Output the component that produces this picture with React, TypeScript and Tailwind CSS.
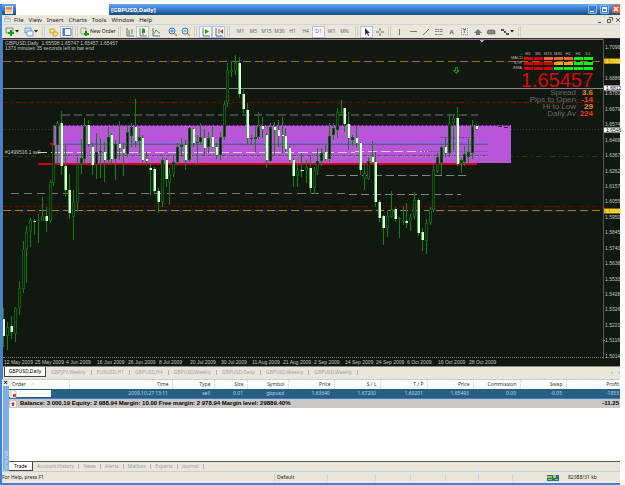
import React from "react";

type Candle = [number, number, number, number, number];

// high, body top, body bottom, low, 1 = falling day
const candles: Candle[] = [
  [308, 319, 336, 347, 1], [322, 327, 336, 350, 0], [316, 326, 332, 339, 1],
  [307, 308, 334, 342, 0], [281, 288, 308, 315, 0], [241, 249, 289, 293, 0],
  [226, 232, 249, 283, 0], [218, 220, 232, 247, 0], [219, 221, 222, 235, 1],
  [214, 220, 221, 243, 0], [197, 216, 221, 221, 0], [207, 216, 221, 232, 1],
  [180, 182, 221, 223, 0], [125, 145, 183, 186, 0], [121, 123, 145, 163, 0],
  [111, 123, 166, 175, 1], [145, 166, 190, 197, 1], [174, 190, 213, 219, 1],
  [190, 202, 217, 240, 0], [157, 164, 203, 212, 0], [139, 158, 164, 174, 0],
  [118, 126, 159, 163, 0], [120, 125, 144, 147, 1], [143, 147, 165, 175, 1],
  [133, 152, 165, 179, 0], [138, 151, 152, 178, 0], [142, 152, 160, 182, 1],
  [127, 137, 160, 165, 0], [133, 135, 159, 163, 1], [140, 144, 159, 180, 0],
  [121, 144, 148, 160, 1], [143, 149, 153, 176, 1], [126, 132, 154, 157, 0],
  [123, 127, 136, 147, 0], [99, 127, 141, 147, 1], [128, 137, 141, 153, 0],
  [135, 138, 160, 162, 1], [152, 159, 161, 166, 1], [163, 168, 170, 195, 1],
  [167, 169, 191, 193, 1], [188, 191, 202, 213, 1], [157, 160, 202, 207, 0],
  [158, 160, 179, 187, 1], [168, 174, 183, 205, 0], [155, 162, 174, 177, 0],
  [143, 147, 162, 165, 0], [138, 145, 147, 157, 0], [140, 145, 160, 170, 1],
  [127, 128, 160, 162, 0], [128, 129, 143, 147, 1], [135, 142, 143, 164, 0],
  [123, 137, 142, 145, 0], [129, 138, 148, 155, 1], [132, 138, 147, 153, 0],
  [127, 137, 147, 148, 1], [143, 147, 155, 159, 1], [132, 137, 155, 160, 0],
  [101, 104, 137, 140, 0], [63, 70, 103, 107, 0], [61, 70, 72, 77, 0],
  [55, 63, 71, 75, 0], [57, 63, 94, 98, 1], [88, 94, 109, 113, 1],
  [103, 110, 138, 145, 1], [135, 138, 139, 145, 0], [127, 137, 139, 152, 0],
  [112, 126, 137, 139, 0], [117, 126, 129, 138, 1], [133, 135, 160, 168, 1],
  [123, 127, 161, 162, 0], [122, 127, 130, 155, 1], [120, 130, 136, 147, 1],
  [117, 135, 136, 153, 1], [128, 136, 149, 152, 1], [146, 148, 160, 162, 1],
  [158, 160, 176, 187, 1], [165, 170, 176, 187, 0], [153, 170, 171, 177, 1],
  [160, 167, 171, 183, 0], [155, 168, 188, 193, 1], [167, 170, 188, 194, 0],
  [148, 161, 171, 175, 0], [148, 153, 161, 166, 0], [145, 152, 159, 161, 1],
  [123, 136, 159, 162, 0], [123, 128, 135, 140, 0], [108, 112, 130, 138, 0],
  [100, 112, 113, 115, 0], [108, 108, 124, 132, 1], [112, 124, 138, 150, 1],
  [135, 137, 140, 146, 0], [126, 138, 143, 147, 1], [142, 143, 170, 175, 1],
  [165, 173, 179, 190, 0], [157, 161, 179, 180, 0], [141, 157, 162, 163, 1],
  [152, 162, 202, 207, 1], [200, 202, 218, 222, 1], [215, 216, 228, 245, 1],
  [211, 216, 228, 237, 0], [191, 209, 217, 218, 0], [207, 209, 219, 222, 1],
  [217, 218, 219, 238, 0], [207, 220, 221, 225, 0], [203, 221, 223, 228, 1],
  [214, 217, 222, 231, 0], [192, 200, 217, 219, 0], [198, 200, 233, 236, 1],
  [228, 232, 240, 251, 1], [219, 223, 241, 254, 0], [207, 209, 223, 225, 0],
  [165, 170, 210, 212, 0], [153, 157, 171, 173, 0], [146, 147, 163, 175, 0],
  [137, 147, 153, 157, 1], [115, 123, 153, 157, 0], [116, 118, 123, 150, 0],
  [107, 118, 164, 166, 1], [158, 160, 164, 173, 0], [146, 154, 162, 166, 0],
  [139, 152, 157, 163, 0], [120, 126, 153, 159, 0], [124, 126, 129, 130, 1],
];

// x1, x2, y, colour, dash pattern, thickness
const levels: [number, number, number, string, string, number][] = [
  [4, 603, 61, "#9a6a10", "8 4", 1],
  [4, 603, 88, "#8c848c", "", 1],
  [4, 603, 102, "#7c0000", "5 3 2 3", 1],
  [63, 478, 114, "#444644", "8 4", 2],
  [4, 603, 129, "#4b3a4e", "1 2", 1],
  [4, 603, 156, "#0d5010", "5 4 1 4", 1],
  [12, 346, 193, "#777777", "8 5", 1],
  [349, 461, 194, "#858585", "8 4", 1],
  [326, 468, 175, "#858585", "8 4", 1],
  [4, 603, 206, "#760000", "4 3 2 3", 1],
  [4, 603, 210, "#b87614", "8 4", 1],
];

const bandLines: [number, number, number, string, string, number][] = [
  [55, 511, 125, "#5a2068", "3 1", 1],
  [55, 511, 129, "#99709c", "1 2", 1],
  [59, 488, 143, "#3d78d0", "2 1", 1],
  [59, 488, 144, "#70528a", "", 1],
  [441, 475, 137, "#5c48a0", "2 1", 1],
  [39, 355, 152, "#dccce0", "9 4", 1],
  [355, 430, 151, "#dccce0", "9 4", 1],
  [422, 488, 151, "#5060c0", "2 1", 1],
  [55, 488, 155, "#6a4478", "4 1 1 1", 1],
  [55, 488, 156, "#a58ca4", "3 2", 1],
  [39, 477, 163, "#d40000", "", 2],
  [51, 55, 143, "#d40000", "", 2],
];

const priceTicks = [
  "1.7096", "1.6991", "1.6886", "1.6781", "1.6679", "1.6574", "1.6469",
  "1.6367", "1.6262", "1.6157", "1.6055", "1.5950", "1.5845", "1.5740",
  "1.5638", "1.5533", "1.5428", "1.5326", "1.5221", "1.5116", "1.5014",
];

const priceMarks = [
  { price: "1.7000", top: 7, className: "bg-[#e8b800] text-[#fff2a0]" },
  { price: "1.6812", top: 15.4, className: "bg-white text-black" },
  { price: "1.6546", top: 28.3, className: "bg-white text-black" },
  { price: "1.6000", top: 53.7, className: "bg-[#e8b800] text-[#fff2a0]" },
];

const dates = [
  "12 May 2009", "25 May 2009", "4 Jun 2009", "16 Jun 2009", "26 Jun 2009",
  "8 Jul 2009", "20 Jul 2009", "30 Jul 2009", "11 Aug 2009", "21 Aug 2009",
  "2 Sep 2009", "14 Sep 2009", "24 Sep 2009", "6 Oct 2009", "16 Oct 2009",
  "28 Oct 2009",
];

const signals = [
  { name: "MACD", cells: "RROOOGG" },
  { name: "STR", cells: "RRRYYGG" },
  { name: "EMA", cells: "RRRGGGG" },
];

const signalColors: Record<string, string> = {
  R: "bg-[#d40000]",
  O: "bg-[#ff6040]",
  Y: "bg-[#ffa000]",
  G: "bg-[#10f010]",
};

const stats = [
  { label: "Spread", value: "3.6", className: "text-[#f08a20]" },
  { label: "Pips to Open", value: "-14", className: "text-[#f03c10]" },
  { label: "Hi to Low", value: "29", className: "text-[#f08a20]" },
  { label: "Daily Av", value: "224", className: "text-[#f03c10]" },
];

const chartTabs = [
  "GBPJPY,Weekly", "EURUSD,H1", "GBPUSD,H4", "GBPUSD,Weekly",
  "GBPUSD,Daily", "GBPUSD,Weekly", "GBPUSD,Weekly",
];

const terminalTabs = [
  "Account History", "News", "Alerts", "Mailbox", "Experts", "Journal",
];

const columns = [
  { name: "Time", width: "w-[103px]", value: "2009.10.27 13:11" },
  { name: "Type", width: "w-[42px]", value: "sell" },
  { name: "Size", width: "w-[33px]", value: "0.01" },
  { name: "Symbol", width: "w-[41px]", value: "gbpusd" },
  { name: "Price", width: "w-[46px]", value: "1.63640" },
  { name: "S / L", width: "w-[46px]", value: "1.67200" },
  { name: "T / P", width: "w-[47px]", value: "1.60201" },
  { name: "Price", width: "w-[46px]", value: "1.65493" },
  { name: "Commission", width: "w-[47px]", value: "0.00" },
  { name: "Swap", width: "w-[46px]", value: "-0.05" },
  { name: "Profit", width: "w-[54px]", value: "-1853" },
];

const Icon = ({ children }: { children: React.ReactNode }) => (
  <svg viewBox="0 0 10 10" className="size-[10px] shrink-0" fill="none">
    {children}
  </svg>
);

const Tool = ({
  label,
  pressed,
  wide,
  children,
}: {
  label: string;
  pressed?: boolean;
  wide?: boolean;
  children: React.ReactNode;
}) => (
  <button
    aria-label={label}
    className={`flex h-3 shrink-0 items-center justify-center border ${
      wide ? "w-[19px]" : "w-[13px]"
    } ${
      pressed ? "border-[#b4c4dc] bg-[#faf9f5]" : "border-transparent"
    }`}
  >
    {children}
  </button>
);

const Handle = () => (
  <span className="mx-[2px] h-[11px] w-[3px] shrink-0 border-x border-l-[#d8cfae] border-r-[#c3d0e4]" />
);

const Caret = () => (
  <svg viewBox="0 0 4 3" className="w-[4px] shrink-0">
    <path d="M0 0h4L2 2.5z" fill="#222" />
  </svg>
);

const TitleBar = () => (
  <header className="flex h-[11px] shrink-0 items-center bg-linear-to-b from-[#69a7ee] via-[#3378d0] to-[#1c4a76]">
    <div className="flex h-full w-[14px] items-center justify-center">
      <svg viewBox="0 0 8 8" className="size-[8px]">
        <path d="M0 0h8v8H0z" fill="#f4e6c4" />
        <path d="M1 1h6v3H1z" fill="#e8876a" />
        <path d="M1 5h6v1H1z" fill="#e3b45a" />
      </svg>
    </div>
    <div className="h-full w-[93px] bg-white" />
    <h1 className="pl-[2px] text-[6px] leading-none font-bold text-white">
      [GBPUSD,Daily]
    </h1>
    <div className="ml-auto flex gap-[3px]">
      <button aria-label="Minimize" className="flex size-[9px] items-end rounded-[1px] border border-[#8fbaf0] bg-[#3b7cd6] p-px">
        <span className="h-px w-[4px] bg-white" />
      </button>
      <button aria-label="Maximize" className="size-[9px] rounded-[1px] border border-[#8fbaf0] bg-[#3b7cd6] p-px">
        <span className="block size-[5px] border border-t-2 border-white" />
      </button>
      <button aria-label="Close" className="size-[8px] rounded-l-[1px] bg-[#e0603c]">
        <svg viewBox="0 0 8 8">
          <path d="M2 2l4 4M6 2L2 6" stroke="#fff" strokeWidth="1.3" />
        </svg>
      </button>
    </div>
  </header>
);

const MenuBar = () => (
  <nav className="flex h-[10px] shrink-0 items-center border-b border-[#ccd6e4] pl-[2px] text-[6px] leading-none text-[#222]">
    <svg viewBox="0 0 8 8" className="mr-[3px] size-[7px]">
      <path d="M0 2h8v5H0z" fill="#9cc4ee" />
      <path d="M1 4h6v2H1z" fill="#e8f2fc" />
      <path d="M1 1h5" stroke="#d4a94c" />
    </svg>
    <div className="flex gap-[5px]">
      {["File", "View", "Insert", "Charts", "Tools", "Window", "Help"].map(
        (item) => (
          <button key={item}>{item}</button>
        )
      )}
    </div>
    <div className="ml-auto flex items-center gap-[3px]">
      <button aria-label="Minimize chart" className="flex size-[6px] items-end">
        <span className="h-px w-[3px] bg-[#555]" />
      </button>
      <button aria-label="Restore chart">
        <svg viewBox="0 0 6 6" className="size-[6px]" fill="none" stroke="#555">
          <path d="M2 .5h3.500v3M.5 2.500h3v3h-3z" />
        </svg>
      </button>
      <button aria-label="Close chart">
        <svg viewBox="0 0 4 6" className="h-[6px] w-[4px]" stroke="#555">
          <path d="M0 1l4 4M4 1L0 5" />
        </svg>
      </button>
    </div>
  </nav>
);

const Toolbar = () => (
  <div className="flex h-[13px] shrink-0 items-center overflow-hidden text-[5px] leading-none text-[#666676]">
    <Tool label="New chart" wide>
      <Icon>
        <path d="M1 1h7v5H1z" fill="#dceedd" stroke="#6b8f70" />
        <path d="M6 3v6M3 6h6" stroke="#12a012" strokeWidth="2" />
      </Icon>
      <Caret />
    </Tool>
    <Tool label="Profiles" wide>
      <Icon>
        <path d="M1 1h6v5H1z" fill="#dce9fa" stroke="#6f9cd6" />
        <path d="M3 4h6v5H3z" fill="#f2f7fd" stroke="#6f9cd6" />
      </Icon>
      <Caret />
    </Tool>
    <Handle />
    <Tool label="Market watch">
      <Icon>
        <path d="M1 2h4l1 2-2 2H1zM4 5h4l1 2-2 2H4z" fill="#fbe48a" stroke="#c79a28" strokeWidth=".8" />
      </Icon>
    </Tool>
    <Tool label="Navigator" pressed>
      <Icon>
        <path d="M1 1.500h8v7H1z" fill="#fff" stroke="#4a7cc4" />
        <path d="M1 1.500h2v7H1z" fill="#4a7cc4" />
      </Icon>
    </Tool>
    <Handle />
    <button className="flex h-3 w-[36px] shrink-0 items-center text-[#222]">
      <Icon>
        <path d="M1 1h5v6H1z" fill="#f2efe2" stroke="#909070" strokeWidth=".8" />
        <path d="M6 4v5M4 7h5" stroke="#12a012" strokeWidth="2" />
      </Icon>
      <span className="whitespace-nowrap">New Order</span>
    </button>
    <Handle />
    <Tool label="Bar chart">
      <Icon>
        <path d="M2 1v8h7M4 3v5M7 2v5" stroke="#667868" />
      </Icon>
    </Tool>
    <Tool label="Candlesticks" pressed>
      <Icon>
        <path d="M2 1v8h7" stroke="#667868" />
        <path d="M5 1v7" stroke="#18a018" />
        <path d="M4 2h3v4H4z" fill="#18a018" />
      </Icon>
    </Tool>
    <Tool label="Line chart">
      <Icon>
        <path d="M2 1v8h7" stroke="#667868" />
        <path d="M3 7l2-4 2 2 2 1" stroke="#55a055" />
      </Icon>
    </Tool>
    <div className="flex pl-[4px]">
      <Tool label="Zoom in">
        <Icon>
          <path d="M6 6l3 3" stroke="#c8a040" strokeWidth="1.600" />
          <circle cx="4" cy="4" r="3" fill="#dcebfc" stroke="#3f78cc" />
          <path d="M2.500 4h3M4 2.500v3" stroke="#3f78cc" />
        </Icon>
      </Tool>
      <Tool label="Zoom out">
        <Icon>
          <path d="M6 6l3 3" stroke="#c8a040" strokeWidth="1.600" />
          <circle cx="4" cy="4" r="3" fill="#dcebfc" stroke="#3f78cc" />
          <path d="M2.500 4h3" stroke="#3f78cc" />
        </Icon>
      </Tool>
    </div>
    <Handle />
    <Tool label="Auto scroll" pressed>
      <Icon>
        <path d="M2 1v8h7" stroke="#667868" />
        <path d="M4 2l4 2.500L4 7z" fill="#18a018" />
      </Icon>
    </Tool>
    <Tool label="Chart shift" pressed>
      <Icon>
        <path d="M2 1v8h7M5 2v5" stroke="#506090" />
        <path d="M9 2v5L6 4.500z" fill="#c83c28" />
      </Icon>
    </Tool>
    <Handle />
    <div className="flex px-[2px]">
      {["M1", "M5", "M15", "M30", "H1", "H4", "D1", "W1", "MN"].map((tf) => (
        <Tool key={tf} label={tf} pressed={tf === "D1"}>
          {tf}
        </Tool>
      ))}
    </div>
    <Handle />
    <Tool label="Cursor" pressed>
      <Icon>
        <path d="M3 1v7l2-2 1 3 1-.5-1-2.500h2z" fill="#333" />
      </Icon>
    </Tool>
    <Tool label="Crosshair">
      <Icon>
        <path d="M5 1v3M5 6v3M1 5h3M6 5h3" stroke="#666" />
      </Icon>
    </Tool>
    <Handle />
    <Tool label="Vertical line">
      <Icon>
        <path d="M4.500 2v6" stroke="#777" />
      </Icon>
    </Tool>
    <Tool label="Horizontal line">
      <Icon>
        <path d="M2 4.500h7" stroke="#777" />
      </Icon>
    </Tool>
    <Tool label="Trendline">
      <Icon>
        <path d="M2 8l6-6" stroke="#777" />
      </Icon>
    </Tool>
    <Tool label="Fibonacci">
      <Icon>
        <path d="M1 2.500h8M1 4.500h8M1 7.500h8" stroke="#888" strokeDasharray="2 .5" />
      </Icon>
    </Tool>
    <Tool label="Text">
      <span className="text-[6px] font-bold">A</span>
    </Tool>
    <Tool label="Text label">
      <span className="border border-dotted border-[#999] px-px text-[5px] font-bold">T</span>
    </Tool>
    <Tool label="Arrow up">
      <Icon>
        <path d="M5 2l4 4H1zM3 6h4v2H3z" fill="#777" />
      </Icon>
    </Tool>
    <Tool label="Stop sign">
      <Icon>
        <path d="M2 3h6l1 1v3H2L1 6z" fill="#888" stroke="#555" strokeWidth=".6" />
      </Icon>
    </Tool>
    <Tool label="Arrows" wide>
      <Icon>
        <path d="M1 2h3v2H1zM4 4h2v2H4zM6 6h3v2H6z" fill="#555" />
      </Icon>
      <Caret />
    </Tool>
    <Handle />
  </div>
);

const PriceChart = () => (
  <svg
    viewBox="4 39 599 318"
    preserveAspectRatio="none"
    shapeRendering="crispEdges"
    className="absolute inset-0 h-full w-full"
  >
    <path d="M4 39.500h599" stroke="#8a848a" />
    <path d="M480 40h5l-2.500 2.500z" fill="#aaaaaa" />
    {levels.map(([x1, x2, y, color, dash, width], i) => (
      <path
        key={i}
        d={`M${x1} ${y + width / 2}H${x2}`}
        stroke={color}
        strokeDasharray={dash || undefined}
        strokeWidth={width}
      />
    ))}
    <rect x="55" y="125" width="456" height="38" fill="#b955d8" />
    {bandLines.map(([x1, x2, y, color, dash, width], i) => (
      <path
        key={i}
        d={`M${x1} ${y + width / 2}H${x2}`}
        stroke={color}
        strokeDasharray={dash || undefined}
        strokeWidth={width}
      />
    ))}
    {candles.map(([high, top, bottom, low, falling], i) => {
      const x = Math.round(4.2 + i * 3.867);
      const height = Math.max(bottom - top, 1);
      return (
        <g key={i}>
          <path d={`M${x + 0.5} ${high}V${low}`} stroke="#138013" />
          {falling ? (
            <>
              <rect x={x - 1} y={top} width="3" height={height} fill="#35b835" />
              <rect x={x} y={top} width="2" height={height} fill="#e2ffe2" />
            </>
          ) : (
            <>
              <rect x={x - 1} y={top} width="3" height={height} fill="#0d5c0d" />
              {height > 2 && (
                <rect x={x} y={top + 1} width="1" height={height - 2} fill="#08180a" />
              )}
            </>
          )}
        </g>
      );
    })}
    <path d="M455.500 67.500h2v3h1.500l-2.500 3-2.500-3h1.500z" fill="none" stroke="#128a12" />
    <path d="M498 126.500h4M504 127.500h4" stroke="#4a1a58" />
  </svg>
);

const SignalPanel = () => (
  <div className="absolute top-[12px] right-[10px] flex flex-col items-end">
    <div className="grid grid-cols-[12px_repeat(7,10px)] text-right text-[4px] leading-[4px] text-[#bbb]">
      <span className="leading-[5px]">..:</span>
      {["M1", "M5", "M15", "M30", "H1", "H4", "D1"].map((tf) => (
        <span key={tf} className="text-center leading-[5px]">
          {tf}
        </span>
      ))}
      {signals.map(({ name, cells }) => (
        <React.Fragment key={name}>
          <span className="pr-px">{name}</span>
          {cells.split("").map((cell, i) => (
            <span key={i} className={`m-px mr-0 h-[3px] ${signalColors[cell]}`} />
          ))}
        </React.Fragment>
      ))}
    </div>
    <p className="text-[20px] leading-[18px] text-[#d80808]">1.65457</p>
    <dl className="grid grid-cols-[auto_17px] text-right text-[8px] leading-[7px]">
      {stats.map(({ label, value, className }) => (
        <React.Fragment key={label}>
          <dt className="text-[#686868]">{label}</dt>
          <dd className={`font-bold ${className}`}>{value}</dd>
        </React.Fragment>
      ))}
    </dl>
  </div>
);

const ChartWindow = () => (
  <main className="flex min-h-[328px] flex-1 flex-col border-t border-[#3a2c3e] bg-[#111810] text-[#c4c4c4]">
    <div className="flex flex-1">
      <section className="relative flex-1 overflow-hidden font-['Liberation_Sans',sans-serif]">
        <PriceChart />
        <div className="absolute top-[2px] left-[2px] text-[5px] leading-[5px] whitespace-pre">
          <p>GBPUSD,Daily  1.65598 1.65747 1.65457 1.65457</p>
          <p>1373 minutes 35 seconds left to bar end</p>
        </div>
        <p className="absolute top-[35%] left-[2px] text-[5px] leading-[5px]">
          #1499516.1 sell
        </p>
        <SignalPanel />
      </section>
      <aside className="relative -mb-[2px] flex w-[17px] flex-col justify-between border-l border-[#5a565a] pt-[6px] font-['Liberation_Sans_Narrow','Liberation_Sans',sans-serif] text-[5px] leading-[5px]">
        {priceTicks.map((price) => (
          <span key={price} className="flex items-center gap-px">
            <i className="h-px w-px bg-[#aaa]" />
            {price}
          </span>
        ))}
        {priceMarks.map(({ price, top, className }) => (
          <span
            key={price}
            className={`absolute inset-x-0 -translate-y-1/2 pl-[2px] ${className}`}
            style={{ top: `${top}%` }}
          >
            {price}
          </span>
        ))}
      </aside>
    </div>
    <div className="mr-[17px] flex h-[9px] shrink-0 border-t border-dotted border-[#777] font-['Liberation_Sans_Narrow','Liberation_Sans',sans-serif] text-[5px] leading-[9px]">
      {dates.map((date) => (
        <span key={date} className="w-[31px] shrink-0 pl-px whitespace-nowrap">
          {date}
        </span>
      ))}
    </div>
  </main>
);

const ChartTabs = () => (
  <div className="flex h-[13px] shrink-0 items-center border-t border-[#888] pb-[2px] pl-px text-[5px] leading-none text-[#9aa3b4]">
    <button className="h-[10px] w-[42px] border border-t-0 border-[#444] bg-white text-black">
      GBPUSD,Daily
    </button>
    {chartTabs.map((tab, i) => (
      <button key={i} className="border-r border-[#b0b0b8] px-[5px]">
        {tab}
      </button>
    ))}
    <span className="ml-auto flex gap-[6px] text-[#556]">
      <button aria-label="Scroll tabs left">‹</button>
      <button aria-label="Scroll tabs right">›</button>
    </span>
  </div>
);

const Terminal = () => (
  <section className="flex h-[93px] shrink-0 border-y border-[#c8ccd4]">
    <div className="flex w-[7px] shrink-0 flex-col items-center">
      <button aria-label="Close terminal" className="text-[7px] leading-[6px] font-bold text-black">
        ×
      </button>
      <div className="flex w-[6px] flex-1 items-center bg-[#7eaee4]">
        <span className="mt-auto rotate-180 text-[5px] leading-[6px] text-[#dbe9fa] [writing-mode:vertical-rl]">
          Terminal
        </span>
      </div>
    </div>
    <div className="flex flex-1 flex-col">
      <div className="flex-1 bg-white">
        <table className="w-full table-fixed border-collapse text-right text-[5px] leading-[9px]">
          <thead>
            <tr className="text-[#333]">
              <th className="w-[60px] border-r border-dotted border-[#ccc] p-0 pl-[3px] text-left font-normal">
                Order <span className="pl-[5px] text-[#999]">∕</span>
              </th>
              {columns.map(({ name, width }, i) => (
                <th
                  key={i}
                  className={`${width} border-r border-dotted border-[#ccc] p-0 pr-[3px] font-normal last:border-0 last:pr-px`}
                >
                  {name}
                </th>
              ))}
            </tr>
          </thead>
          <tbody>
            <tr className="border-b border-[#3f7cc8] bg-[#265f80] text-[#b8d4f0]">
              <td className="p-0">
                <div className="flex h-[7px] w-[42px] items-center bg-white">
                  <svg viewBox="0 0 8 8" className="size-[8px]">
                    <path d="M1 0h4l2 2v6H1z" fill="#f4f4ee" stroke="#888" strokeWidth=".5" />
                    <path d="M4 4h3v3H4z" fill="#e04a20" />
                  </svg>
                </div>
              </td>
              {columns.map(({ value }, i) => (
                <td key={i} className="p-0 pr-[4px] last:pr-px">
                  {value}
                </td>
              ))}
            </tr>
            <tr className="bg-[#cac8c6] font-['Liberation_Sans',sans-serif] text-[6px] font-bold text-black">
              <td colSpan={11} className="p-0 text-left">
                <div className="flex items-center gap-[4px] pl-px whitespace-nowrap">
                  <svg viewBox="0 0 6 6" className="size-[6px]">
                    <path d="M0 0h6v6H0z" fill="#f6eeee" />
                    <path d="M3 1l2 2H4v2H2V3H1z" fill="#d83018" />
                  </svg>
                  Balance: 3 000.19 Equity: 2 988.94 Margin: 10.00 Free margin: 2
                  978.94 Margin level: 29889.40%
                </div>
              </td>
              <td className="p-0 pr-px">-11.25</td>
            </tr>
          </tbody>
        </table>
      </div>
      <div className="flex h-[10px] items-center border-t border-[#555] text-[5px] leading-none text-[#9a9ea8]">
        <button className="h-[9px] w-[24px] border-r border-b border-[#444] bg-white text-black">
          Trade
        </button>
        {terminalTabs.map((tab) => (
          <button key={tab} className="border-r border-[#b0b0b8] px-[4px]">
            {tab}
          </button>
        ))}
      </div>
    </div>
  </section>
);

const StatusBar = () => (
  <footer className="grid h-[11px] shrink-0 grid-cols-[272px_53px_48px_35px_35px_33px_34px_1fr] items-center text-[5px] leading-[7px] text-[#222]">
    <span>For Help, press F1</span>
    <span className="border-l border-[#c4c8d0] pl-[2px]">Default</span>
    {[0, 1, 2, 3, 4].map((i) => (
      <span key={i} className="h-[7px] border-l border-[#cdd3de]" />
    ))}
    <span className="flex items-center gap-[9px] border-l border-[#cdd3de] pl-[34px] whitespace-nowrap">
      <svg viewBox="0 0 12 6" className="h-[6px] w-[12px]" shapeRendering="crispEdges">
        <path d="M0 0h12v6H0z" fill="#2c6c9c" />
        <path d="M0 1h5v2H0zM6 0h3v3H6zM1 4h4v1H1zM8 4h3v1H8z" fill="#a8c840" />
      </svg>
      82388/31 kb
    </span>
  </footer>
);

const App = () => {
  return (
    <div className="flex min-h-screen flex-col bg-white pt-[4px] pr-[5px] font-['Noto_Sans',sans-serif]">
      <div className="flex flex-1 flex-col border-b-2 border-l-2 border-[#3d82dc] bg-[#e9e6da]">
        <TitleBar />
        <MenuBar />
        <Toolbar />
        <div className="flex flex-1 flex-col border-l border-[#777]">
          <ChartWindow />
          <ChartTabs />
        </div>
        <Terminal />
        <StatusBar />
      </div>
    </div>
  );
};

export default App;
